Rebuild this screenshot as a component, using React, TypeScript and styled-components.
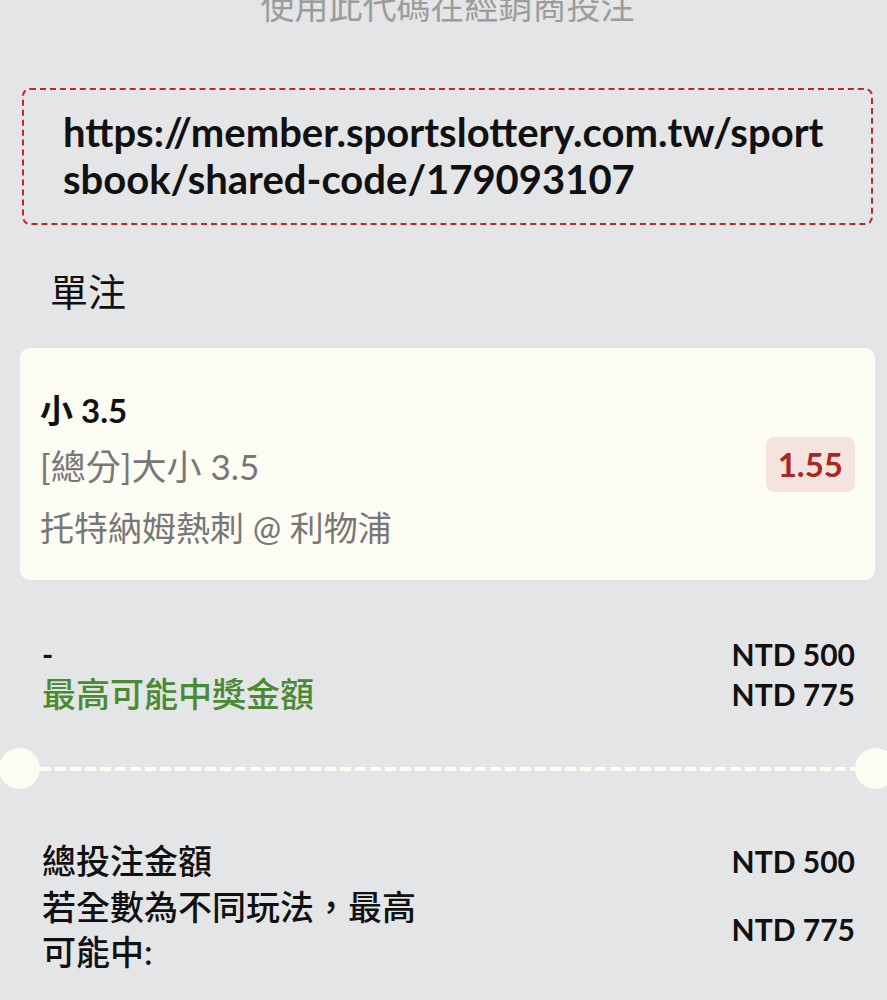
import styled, { createGlobalStyle } from 'styled-components';

const GlobalStyle = createGlobalStyle`
  html, body {
    margin: 0;
    padding: 0;
    background: #e4e5e7;
  }
  body {
    font-family: Lato, "Noto Sans CJK TC", sans-serif;
    overflow: hidden;
  }
`;

const SUMMARY = [
  { label: '總投注金額', value: 'NTD 500' },
  { label: '若全數為不同玩法，最高可能中:', value: 'NTD 775' },
];

const App = () => {
  return (
    <>
      <GlobalStyle />
      <Page>
        <Hint>使用此代碼在經銷商投注</Hint>
        <CodeBox>https://member.sportslottery.com.tw/sportsbook/shared-code/179093107</CodeBox>
        <SectionTitle>單注</SectionTitle>
        <BetCard>
          <BetInfo>
            <Selection>小 3.5</Selection>
            <Market>[總分]大小 3.5</Market>
            <Match>托特納姆熱刺 @ 利物浦</Match>
          </BetInfo>
          <Odds>1.55</Odds>
        </BetCard>
        <StakeRow>
          <StakeLabels>
            <Dash>-</Dash>
            <WinLabel>最高可能中獎金額</WinLabel>
          </StakeLabels>
          <StakeValues>
            <Amount>NTD 500</Amount>
            <Amount>NTD 775</Amount>
          </StakeValues>
        </StakeRow>
        <Perforation>
          <Notch side="left" />
          <DashLine />
          <Notch side="right" />
        </Perforation>
        <Summary>
          {SUMMARY.map((item) => (
            <SummaryRow key={item.label}>
              <SummaryLabel>{item.label}</SummaryLabel>
              <Amount>{item.value}</Amount>
            </SummaryRow>
          ))}
        </Summary>
      </Page>
    </>
  );
};

const Page = styled.main`
  display: flex;
  flex-direction: column;

  width: 887px;
  height: 1000px;
  padding: 0 12px 0 20px;
  box-sizing: border-box;
  overflow: hidden;
`;

const Hint = styled.div`
  margin-top: -14px;

  color: #9c9c9c;
  font-size: 34px;
  line-height: 40px;
  text-align: center;
`;

const CodeBox = styled.div`
  margin: 62px 2px 0 2px;
  padding: 19px 42px 20px 39px;
  border: 2px dashed #c0272d;
  border-radius: 8px;

  color: #111;
  font-size: 40px;
  font-weight: 700;
  line-height: 47px;
  word-break: break-all;
`;

const SectionTitle = styled.h2`
  margin: 42px 0 0 30px;

  color: #111;
  font-size: 38px;
  font-weight: 400;
  line-height: 48px;
`;

const BetCard = styled.section`
  display: flex;
  align-items: center;
  justify-content: space-between;

  margin-top: 33px;
  padding: 0 20px;
  border-radius: 10px;

  background: #fdfcf3;
`;

const BetInfo = styled.div`
  display: flex;
  flex-direction: column;
  gap: 6px;

  padding: 40px 0 24px;
`;

const Selection = styled.div`
  color: #111;
  font-size: 33px;
  font-weight: 700;
  line-height: 44px;
`;

const Market = styled.div`
  color: #777;
  font-size: 35px;
  line-height: 56px;
`;

const Match = styled.div`
  color: #777;
  font-size: 34px;
  line-height: 56px;
`;

const Odds = styled.div`
  padding: 6px 12px;
  border-radius: 8px;

  background: #f5e4de;
  color: #ad2424;
  font-size: 33px;
  font-weight: 700;
  line-height: 43px;
`;

const StakeRow = styled.div`
  display: flex;
  justify-content: space-between;

  margin-top: 54px;
  padding: 0 20px 0 22px;
`;

const StakeLabels = styled.div`
  display: flex;
  flex-direction: column;
`;

const Dash = styled.div`
  color: #111;
  font-size: 30px;
  font-weight: 700;
  line-height: 40px;
`;

const WinLabel = styled.div`
  color: #4b8a33;
  font-size: 34px;
  font-weight: 500;
  line-height: 40px;
`;

const StakeValues = styled.div`
  display: flex;
  flex-direction: column;
  align-items: flex-end;
`;

const Amount = styled.div`
  color: #111;
  font-size: 30px;
  font-weight: 700;
  line-height: 40px;
  white-space: nowrap;
`;

const Perforation = styled.div`
  display: flex;
  align-items: center;

  margin: 34px -12px 0 -20px;
`;

const Notch = styled.div<{ side: 'left' | 'right' }>`
  flex: none;

  width: 41px;
  height: 41px;
  margin-left: ${(p) => (p.side === 'left' ? '-1px' : '0')};
  margin-right: ${(p) => (p.side === 'right' ? '-9px' : '0')};
  border-radius: 50%;

  background: #fdfcf3;
`;

const DashLine = styled.div`
  flex: 1;

  height: 4px;

  background: repeating-linear-gradient(90deg, #fdfcf3 0 11px, transparent 11px 15px);
`;

const Summary = styled.div`
  display: flex;
  flex-direction: column;
  gap: 1px;

  margin-top: 49px;
  padding: 0 20px 0 22px;
`;

const SummaryRow = styled.div`
  display: flex;
  align-items: center;
  justify-content: space-between;
`;

const SummaryLabel = styled.div`
  max-width: 390px;

  color: #111;
  font-size: 34px;
  font-weight: 500;
  line-height: 45px;
`;

export default App;
